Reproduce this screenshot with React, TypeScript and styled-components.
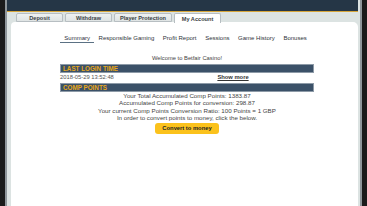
import React from 'react';
import styled, { createGlobalStyle } from 'styled-components';

const GlobalStyle = createGlobalStyle`
  html, body {
    margin: 0;
    padding: 0;
    background: #1b1b1b;
    overflow: hidden;
  }
  body {
    font-family: "Liberation Sans", Arial, sans-serif;
  }
`;

const Shell = styled.div`
  height: 206px;
  margin: 0 5px;
  border-left: 2px solid #8f969b;
  border-right: 2px solid #8f969b;
  background: #dce3e2;
  display: flex;
  flex-direction: column;
`;

const Header = styled.div`
  height: 11px;
  background: #253646;
  border-bottom: 1px solid #d6a63a;
  margin-right: 2px;
`;

const TabRow = styled.div`
  display: flex;
  gap: 2px;
  padding: 1px 0 0 9px;
  height: 9px;
`;

const Tab = styled.div<{ $active?: boolean; $width: number }>`
  width: ${(p) => p.$width}px;
  height: ${(p) => (p.$active ? 10 : 9)}px;
  box-sizing: border-box;
  border: 1px solid #b7bec2;
  border-bottom: ${(p) => (p.$active ? 'none' : '1px solid #b7bec2')};
  border-radius: 2px 2px 0 0;
  background: ${(p) => (p.$active ? '#ffffff' : 'linear-gradient(#eef1f1, #dfe4e4)')};
  font-size: 5.6px;
  font-weight: bold;
  color: #3a3f44;
  white-space: nowrap;
  display: flex;
  align-items: center;
  justify-content: center;
  position: relative;
  z-index: 1;
`;

const Panel = styled.div`
  flex: 1;
  background: #ffffff;
  margin: 0 2px 0 4px;
  border-radius: 4px 5px 0 0;
`;

const Column = styled.div`
  width: 254px;
  margin-left: 49px;
  display: flex;
  flex-direction: column;
`;

const SubTabs = styled.div`
  display: flex;
  margin-top: 12px;
  height: 9px;
`;

const SubTab = styled.div<{ $active?: boolean }>`
  flex-shrink: 0;
  white-space: nowrap;
  padding: 0 4.3px;
  font-size: 6px;
  color: #2e3339;
  line-height: 8px;
  border-bottom: 1.5px solid ${(p) => (p.$active ? '#5b7184' : 'transparent')};
`;

const Welcome = styled.div`
  margin-top: 12px;
  text-align: center;
  font-size: 5.8px;
  color: #444;
  line-height: 7px;
`;

const Bar = styled.div<{ $top: number }>`
  margin-top: ${(p) => p.$top}px;
  height: 9px;
  box-sizing: border-box;
  background: #3b5168;
  border: 1px solid #8d9aa7;
  color: #e9a81a;
  font-size: 6.3px;
  font-weight: bold;
  line-height: 7px;
  padding-left: 2px;
`;

const LoginRow = styled.div`
  display: grid;
  grid-template-columns: 92px 1fr;
  font-size: 5.8px;
  color: #555;
  line-height: 8px;
`;

const ShowMore = styled.a`
  text-align: center;
  color: #333;
  text-decoration: underline;
  font-weight: bold;
`;

const InfoLines = styled.div`
  text-align: center;
  font-size: 6.2px;
  color: #444;
  line-height: 7.4px;
`;

const ConvertButton = styled.button`
  align-self: center;
  margin-top: 1px;
  width: 64px;
  height: 11px;
  border: none;
  border-radius: 3px;
  background: #fbc21c;
  color: #222;
  font-family: inherit;
  font-size: 5.8px;
  font-weight: bold;
  padding: 0;
`;

const tabs = [
  { label: 'Deposit', width: 47 },
  { label: 'Withdraw', width: 47 },
  { label: 'Player Protection', width: 58 },
  { label: 'My Account', width: 47, active: true },
];

const subTabs = ['Summary', 'Responsible Gaming', 'Profit Report', 'Sessions', 'Game History', 'Bonuses'];

const App: React.FC = () => {
  return (
    <>
      <GlobalStyle />
      <Shell>
        <Header />
        <TabRow>
          {tabs.map((t) => (
            <Tab key={t.label} $width={t.width} $active={t.active}>
              {t.label}
            </Tab>
          ))}
        </TabRow>
        <Panel>
          <Column>
            <SubTabs>
              {subTabs.map((s, i) => (
                <SubTab key={s} $active={i === 0}>
                  {s}
                </SubTab>
              ))}
            </SubTabs>
            <Welcome>Welcome to Betfair Casino!</Welcome>
            <Bar $top={2}>LAST LOGIN TIME</Bar>
            <LoginRow>
              <span>2018-05-29 13:52:48</span>
              <ShowMore>Show more</ShowMore>
            </LoginRow>
            <Bar $top={2}>COMP POINTS</Bar>
            <InfoLines>
              <div>Your Total Accumulated Comp Points: 1383.87</div>
              <div>Accumulated Comp Points for conversion: 298.87</div>
              <div>Your current Comp Points Conversion Ratio: 100 Points = 1 GBP</div>
              <div>In order to convert points to money, click the below.</div>
            </InfoLines>
            <ConvertButton>Convert to money</ConvertButton>
          </Column>
        </Panel>
      </Shell>
    </>
  );
};

export default App;
